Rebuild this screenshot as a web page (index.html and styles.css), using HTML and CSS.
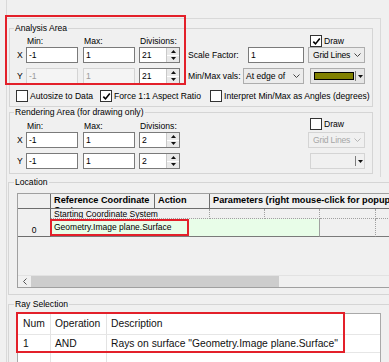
FILE: index.html
```html
<!DOCTYPE html>
<html lang="en">
<head>
    <meta charset="UTF-8">
    <meta name="viewport" content="width=device-width, initial-scale=1.0">
    <title>Ray Selection</title>
    <link rel="stylesheet" href="styles.css">
</head>
<body>
    <div class="page">
        <div class="top-gap"></div>

        <div class="panel">
            <!-- analysis area -->
            <fieldset class="group group-analysis">
                <legend>Analysis Area</legend>
                <div class="area-grid">
                    <span></span>
                    <span class="col-head">Min:</span>
                    <span class="col-head">Max:</span>
                    <span class="col-head">Divisions:</span>
                    <div class="side side-head">
                        <span class="check"><span class="cb"><svg width="9" height="9" viewBox="0 0 9 9"><path d="M1.3 4.6 L3.5 6.9 L7.8 1.6" fill="none" stroke="#000" stroke-width="1.6"/></svg></span>Draw</span>
                    </div>

                    <span class="axis">X</span>
                    <span class="field">-1</span>
                    <span class="field">1</span>
                    <span class="spin">
                        <span class="spin-val">21</span>
                        <span class="spin-btns">
                            <span><svg width="5" height="3" viewBox="0 0 5 3"><path d="M0 3 L2.5 0 L5 3Z" fill="#111"/></svg></span>
                            <span><svg width="5" height="3" viewBox="0 0 5 3"><path d="M0 0 L2.5 3 L5 0Z" fill="#111"/></svg></span>
                        </span>
                    </span>
                    <div class="side">
                        <span class="label-scale">Scale Factor:</span>
                        <span class="field field-scale">1</span>
                        <span class="combo combo-grid">Grid Lines<svg width="7" height="4" viewBox="0 0 7 4"><path d="M0.5 0.5 L3.5 3.5 L6.5 0.5" fill="none" stroke="#444"/></svg></span>
                    </div>

                    <span class="axis">Y</span>
                    <span class="field disabled">-1</span>
                    <span class="field disabled">1</span>
                    <span class="spin">
                        <span class="spin-val">21</span>
                        <span class="spin-btns">
                            <span><svg width="5" height="3" viewBox="0 0 5 3"><path d="M0 3 L2.5 0 L5 3Z" fill="#111"/></svg></span>
                            <span><svg width="5" height="3" viewBox="0 0 5 3"><path d="M0 0 L2.5 3 L5 0Z" fill="#111"/></svg></span>
                        </span>
                    </span>
                    <div class="side">
                        <span class="label-minmax">Min/Max vals:</span>
                        <span class="combo combo-edge">At edge of<svg width="7" height="4" viewBox="0 0 7 4"><path d="M0.5 0.5 L3.5 3.5 L6.5 0.5" fill="none" stroke="#444"/></svg></span>
                        <span class="color-pick">
                            <span class="swatch"></span>
                            <span class="drop"><svg width="5" height="3" viewBox="0 0 5 3"><path d="M0 0 L2.5 3 L5 0Z" fill="#111"/></svg></span>
                        </span>
                    </div>
                </div>

                <div class="check-row">
                    <span class="check check-autosize"><span class="cb"></span>Autosize to Data</span>
                    <span class="check check-force"><span class="cb"><svg width="9" height="9" viewBox="0 0 9 9"><path d="M1.3 4.6 L3.5 6.9 L7.8 1.6" fill="none" stroke="#000" stroke-width="1.6"/></svg></span>Force 1:1 Aspect Ratio</span>
                    <span class="check"><span class="cb"></span>Interpret Min/Max as Angles (degrees)</span>
                </div>
            </fieldset>

            <!-- rendering area -->
            <fieldset class="group group-render">
                <legend>Rendering Area (for drawing only)</legend>
                <div class="area-grid area-grid-render">
                    <span></span>
                    <span class="col-head">Min:</span>
                    <span class="col-head">Max:</span>
                    <span class="col-head">Divisions:</span>
                    <div class="side side-head">
                        <span class="check"><span class="cb"></span>Draw</span>
                    </div>

                    <span class="axis">X</span>
                    <span class="field">-1</span>
                    <span class="field">1</span>
                    <span class="spin">
                        <span class="spin-val">2</span>
                        <span class="spin-btns">
                            <span><svg width="5" height="3" viewBox="0 0 5 3"><path d="M0 3 L2.5 0 L5 3Z" fill="#111"/></svg></span>
                            <span><svg width="5" height="3" viewBox="0 0 5 3"><path d="M0 0 L2.5 3 L5 0Z" fill="#111"/></svg></span>
                        </span>
                    </span>
                    <div class="side">
                        <span class="combo combo-grid combo-off push-grid">Grid Lines<svg width="7" height="4" viewBox="0 0 7 4"><path d="M0.5 0.5 L3.5 3.5 L6.5 0.5" fill="none" stroke="#b5b5b5"/></svg></span>
                    </div>

                    <span class="axis">Y</span>
                    <span class="field">-1</span>
                    <span class="field">1</span>
                    <span class="spin">
                        <span class="spin-val">2</span>
                        <span class="spin-btns">
                            <span><svg width="5" height="3" viewBox="0 0 5 3"><path d="M0 3 L2.5 0 L5 3Z" fill="#111"/></svg></span>
                            <span><svg width="5" height="3" viewBox="0 0 5 3"><path d="M0 0 L2.5 3 L5 0Z" fill="#111"/></svg></span>
                        </span>
                    </span>
                    <div class="side">
                        <span class="color-pick color-off push-color">
                            <span class="drop"><svg width="5" height="3" viewBox="0 0 5 3"><path d="M0 0 L2.5 3 L5 0Z" fill="#111"/></svg></span>
                        </span>
                    </div>
                </div>
            </fieldset>
        </div>

        <!-- location grid -->
        <fieldset class="group group-wide">
            <legend>Location</legend>
            <div class="lgrid">
                <span class="gh"></span>
                <span class="gh">Reference Coordinate System</span>
                <span class="gh">Action</span>
                <span class="gh gh-params">Parameters (right mouse-click for popup menu)</span>

                <span class="rh">0</span>
                <span class="gc gc-wide">Starting Coordinate System</span>
                <span class="gc"></span>
                <span class="gc"></span>
                <span class="gc"></span>
                <span class="gc"></span>

                <span class="gc gc-last gc-green">Geometry.Image plane.Surface</span>
                <span class="gc gc-last"></span>
                <span class="gc gc-last"></span>

                <span class="gempty"></span>

                <div class="hscroll">
                    <span class="sb-btn"><svg width="4" height="7" viewBox="0 0 4 7"><path d="M3.5 0.5 L0.5 3.5 L3.5 6.5" fill="none" stroke="#555"/></svg></span>
                    <span class="sb-thumb"></span>
                </div>
            </div>
        </fieldset>

        <!-- ray selection -->
        <fieldset class="group group-wide group-ray">
            <legend>Ray Selection</legend>
            <div class="rtable">
                <span class="rc">Num</span>
                <span class="rc">Operation</span>
                <span class="rc">Description</span>

                <span class="rc">1</span>
                <span class="rc">AND</span>
                <span class="rc">Rays on surface "Geometry.Image plane.Surface"</span>

                <span class="rc rc-empty"></span>
                <span class="rc rc-empty"></span>
                <span class="rc rc-empty"></span>
            </div>
        </fieldset>
    </div>

    <!-- red annotation boxes -->
    <div class="mark mark-analysis"></div>
    <div class="mark mark-cell"></div>
    <div class="mark mark-rays"></div>
</body>
</html>
```

FILE: styles.css
```css
* {
    box-sizing: border-box;
}

html, body {
    overflow: hidden;
}

body {
    margin: 0;
    height: 362px;
    position: relative;
    background: #f0f0f0;
    color: #000;
    font-family: "Liberation Sans", Arial, sans-serif;
    font-size: 8.6px;
    line-height: 11px;
}

.page {
    margin-left: 6px;
    height: 362px;
    border-left: 1px solid #d9d9d9;
}

.top-gap {
    height: 18px;
}

.panel {
    width: 374px;
    padding: 0 0 3px 2px;
    border-top: 1px solid #d9d9d9;
    border-right: 1px solid #d9d9d9;
}

/* group boxes */
.group {
    margin: 0;
    min-width: 0;
    padding: 0 0 4px 7px;
    border: 1px solid #d5d5d5;
}

.group legend {
    margin-left: -3px;
    padding: 0 1px;
    line-height: 11px;
}

.group-analysis {
    width: 364px;
    margin-top: 4px;
    padding-top: 1px;
}

.group-render {
    width: 364px;
}

.group-wide {
    width: 400px;
    margin-left: 1px;
    padding: 5px 0 6px 8px;
}

.group-ray {
    margin-top: 4px;
    padding-top: 3px;
}

/* min / max / divisions rows */
.area-grid {
    display: grid;
    grid-template-columns: 9px 57px 56px 49px 1fr;
    grid-template-rows: 12px 21px 16px;
    align-items: start;
}

.area-grid-render {
    grid-template-rows: 14px 21px 16px;
}

.col-head {
    align-self: end;
    padding-left: 1px;
}

.axis {
    line-height: 16px;
}

.field {
    display: block;
    width: 52px;
    height: 16px;
    padding-left: 2px;
    border: 1px solid #7a7a7a;
    background: #fff;
    line-height: 14px;
}

.field.disabled {
    border-color: #d4d4d4;
    background: #f4f4f4;
    color: #9b9b9b;
}

.spin {
    display: flex;
    width: 41px;
    height: 16px;
    border: 1px solid #7a7a7a;
    background: #fff;
}

.spin-val {
    flex: 1;
    padding-left: 2px;
    line-height: 14px;
}

.spin-btns {
    width: 13px;
    display: flex;
    flex-direction: column;
    border-left: 1px solid #c9c9c9;
    background: #e9e9e9;
}

.spin-btns span {
    flex: 1;
    display: flex;
    align-items: center;
    justify-content: center;
}

.spin-btns span + span {
    border-top: 1px solid #fff;
}

.side {
    display: flex;
    align-items: center;
    height: 16px;
}

.side-head {
    align-self: start;
    height: auto;
    padding-left: 122px;
}

.label-scale {
    width: 60px;
}

.label-minmax {
    width: 55px;
}

.field-scale {
    width: 56px;
    margin-right: 4px;
}

.combo {
    display: flex;
    align-items: center;
    justify-content: space-between;
    height: 16px;
    padding: 0 3px 0 4px;
    border: 1px solid #adadad;
    background: #ececec;
    white-space: nowrap;
}

.combo svg {
    flex: none;
    margin-left: 2px;
}

.combo-grid {
    width: 57px;
    letter-spacing: -0.2px;
}

.combo-edge {
    width: 61px;
    margin-right: 6px;
    padding-left: 2px;
}

.combo-off {
    color: #a6a6a6;
    border-color: #d4d4d4;
    background: #f0f0f0;
}

.push-grid {
    margin-left: 120px;
}

.push-color {
    margin-left: 122px;
}

.color-pick {
    display: flex;
    align-items: center;
    width: 55px;
    height: 16px;
    padding-left: 3px;
    border: 1px solid #adadad;
    background: #e6e6e6;
}

.color-off {
    border-color: #d4d4d4;
    background: #f0f0f0;
}

.swatch {
    width: 40px;
    height: 8px;
    border: 1px solid #000;
    background: #808000;
}

.drop {
    display: flex;
    align-items: center;
    width: 9px;
    height: 10px;
    margin-left: auto;
    padding-left: 2px;
    border-left: 1px solid #7d7d7d;
}

/* check boxes */
.check {
    display: flex;
    align-items: center;
    gap: 1px;
}

.cb {
    display: flex;
    align-items: center;
    justify-content: center;
    width: 12px;
    height: 12px;
    margin-right: 1px;
    border: 1px solid #333;
    background: #fff;
}

.check-row {
    display: flex;
    align-items: center;
    height: 12px;
    margin: 6px 0 0 -1px;
}

.check-autosize {
    width: 84px;
}

.check-force {
    width: 110px;
}

/* location grid */
.lgrid {
    display: grid;
    width: 380px;
    grid-template-columns: 33px 104px 55px 55px 55px 56px 60px;
    grid-template-rows: 15px 10px 18px 38px 12px;
    border: 1px solid #a0a0a0;
    font-size: 8.5px;
    line-height: 10px;
}

.gh {
    overflow: hidden;
    padding: 1px 0 0 3px;
    border-right: 1px solid #6d6d6d;
    border-bottom: 1px solid #6d6d6d;
    font-weight: bold;
    font-size: 9.2px;
}

.gh-params {
    grid-column: 4 / -1;
    white-space: nowrap;
}

.rh {
    grid-row: 2 / 4;
    display: flex;
    align-items: flex-end;
    justify-content: center;
    padding-bottom: 1px;
    border-right: 1px solid #6d6d6d;
    border-bottom: 1px solid #6d6d6d;
}

.gc {
    overflow: hidden;
    white-space: nowrap;
    padding-left: 3px;
    border-right: 1px dotted #a0a0a0;
    border-bottom: 1px dotted #a0a0a0;
}

.gc-wide {
    grid-column: 2 / 4;
}

.gc-last {
    line-height: 17px;
    border-bottom: 1px solid #7a7a7a;
}

.gc-green {
    grid-column: 2 / 6;
    background: #e8fde8;
    border-right-style: solid;
}

.gempty {
    grid-column: 1 / -1;
}

.hscroll {
    grid-column: 1 / -1;
    display: flex;
    border-top: 1px solid #e2e2e2;
}

.sb-btn {
    display: flex;
    align-items: center;
    justify-content: center;
    width: 13px;
}

.sb-thumb {
    width: 248px;
    background: #cdcdcd;
}

/* ray selection list */
.rtable {
    display: grid;
    width: 364px;
    grid-template-columns: 33px 56px 1fr;
    grid-template-rows: 21px 18px 30px;
    border: 1px solid #a9a9a9;
    border-bottom: none;
    background: #fff;
    font-size: 10.3px;
    line-height: 17px;
    color: #111;
}

.rc {
    white-space: nowrap;
    padding-left: 4px;
    border-right: 1px solid #e3e3e3;
    border-bottom: 1px solid #e6e6e6;
}

.rc:nth-child(3n+1) {
    padding-left: 5px;
}

.rc:nth-child(3n) {
    border-right: none;
}

.rtable .rc:nth-child(-n+3) {
    line-height: 20px;
}

.rc-empty {
    border-bottom: none;
}

/* annotation boxes */
.mark {
    position: absolute;
    border: 2px solid #e3202a;
}

.mark-analysis {
    left: 5px;
    top: 15px;
    width: 181px;
    height: 70px;
}

.mark-cell {
    left: 50px;
    top: 219px;
    width: 139px;
    height: 17px;
}

.mark-rays {
    left: 16px;
    top: 312px;
    width: 329px;
    height: 41px;
}
```
